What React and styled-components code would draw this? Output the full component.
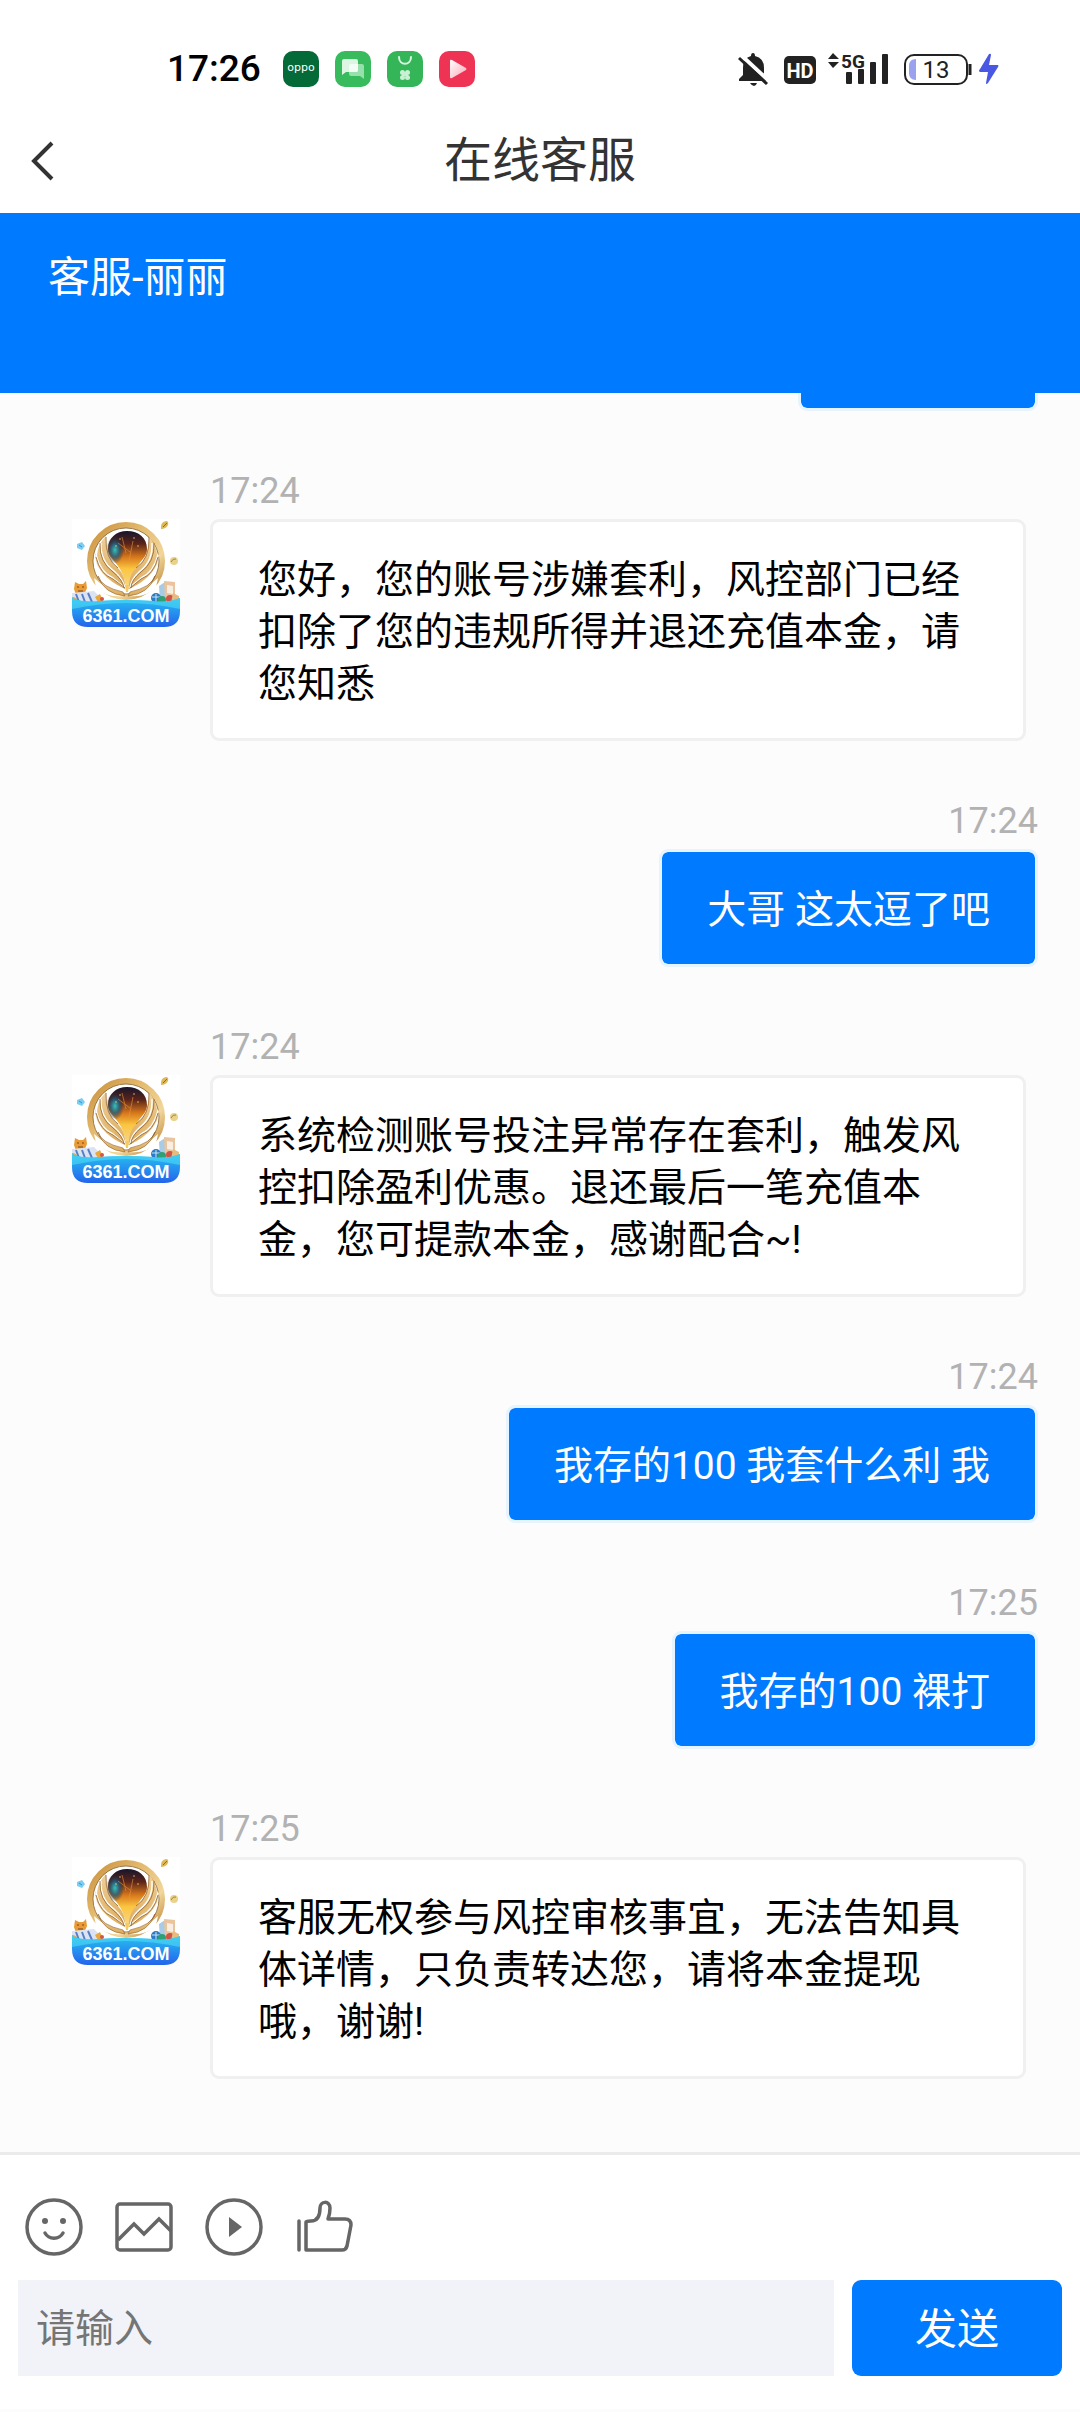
import React, { useState } from 'react'
import styled, { createGlobalStyle } from "styled-components";

const GlobalStyle = createGlobalStyle`
    * {
        box-sizing: border-box;
    }
    body {
        margin: 0;
        background-color: #ffffff;
        font-family: Roboto, "Noto Sans CJK SC", sans-serif;
    }
    button, input {
        font-family: inherit;
        border: none;
        padding: 0;
    }
`
const Page = styled.div`
    display: flex;
    flex-direction: column;
    height: 100vh;
    background-color: #fcfcfc;
`
const StatusBar = styled.div`
    display: flex;
    align-items: center;
    justify-content: space-between;
    height: 105px;
    padding: 33px 80px 0 167px;
    background-color: #ffffff;
`
const StatusGroup = styled.div`
    display: flex;
    align-items: center;
    gap: ${({ $gap }) => $gap};
`
const Clock = styled.span`
    font-size: 37px;
    font-weight: 500;
    line-height: 48px;
    color: #000000;
    margin-right: 6px;
`
const TitleBar = styled.header`
    display: grid;
    grid-template-columns: 90px 1fr 90px;
    align-items: center;
    height: 108px;
    background-color: #ffffff;
`
const BackButton = styled.button`
    display: flex;
    align-items: center;
    height: 108px;
    padding-left: 24px;
    background: none;
`
const Title = styled.h1`
    margin: 0;
    padding-top: 4px;
    text-align: center;
    font-size: 48px;
    font-weight: 400;
    line-height: 72px;
    color: #333333;
`
const AgentBanner = styled.div`
    height: 180px;
    padding: 35px 48px;
    flex-shrink: 0;
    background-color: #007aff;
    color: #ffffff;
    font-size: 42px;
    line-height: 60px;
`
/* column-reverse keeps the newest message in view */
const ChatWrapper = styled.main`
    display: flex;
    flex-direction: column-reverse;
    flex: 1;
    min-height: 0;
    overflow-y: auto;
    scrollbar-width: none;
`
const MessageList = styled.div`
    display: flex;
    flex-direction: column;
    gap: 59px;
    padding: 0 42px 73px 72px;
`
const Row = styled.div`
    display: flex;
    align-items: flex-end;
    justify-content: ${({ $mine }) => ($mine ? "flex-end" : "flex-start")};
    gap: 30px;
    padding-right: ${({ $mine }) => ($mine ? "0" : "12px")};
`
const AvatarWrapper = styled.div`
    align-self: flex-start;
    flex-shrink: 0;
    height: 157px;
    padding-top: 49px;
`
const MessageBody = styled.div`
    display: flex;
    flex-direction: column;
    align-items: ${({ $mine }) => ($mine ? "flex-end" : "flex-start")};
`
const Time = styled.time`
    margin-bottom: 7px;
    font-size: 36px;
    line-height: 42px;
    color: #b2b2b2;
`
const Bubble = styled.div`
    min-width: 240px;
    min-height: 118px;
    padding: 32px 45px 28px;
    border: 3px solid ${({ $mine }) => ($mine ? "#e6f4fd" : "#f0f0f0")};
    border-radius: 9px;
    background-color: ${({ $mine }) => ($mine ? "#007aff" : "#ffffff")};
    background-clip: padding-box;
    color: ${({ $mine }) => ($mine ? "#ffffff" : "#000000")};
    font-size: 39px;
    line-height: 52px;
`
const Footer = styled.form`
    flex-shrink: 0;
    margin-bottom: 3px;
    padding: 43px 18px 33px;
    border-top: 3px solid #ebebeb;
    background-color: #ffffff;
`
const ToolRow = styled.div`
    display: flex;
    gap: 32px;
    padding: 0 7px;
    margin-bottom: 24px;
`
const ToolButton = styled.button`
    display: flex;
    width: 58px;
    height: 58px;
    background: none;
    color: #666666;
`
const InputRow = styled.div`
    display: flex;
    gap: 18px;
`
const TextInput = styled.input`
    flex: 1;
    min-width: 0;
    height: 96px;
    padding: 2px 18px 0;
    border-radius: 0;
    background-color: #f2f3f8;
    color: #333333;
    font-size: 39px;
    outline: none;
    &::placeholder {
        color: #757575;
    }
`
const SendButton = styled.button`
    width: 210px;
    height: 96px;
    padding-bottom: 6px;
    border-radius: 9px;
    background-color: #007aff;
    color: #ffffff;
    font-size: 42px;
`


/**
 * Status bar icons
 */

const OppoIcon = () => (
    <svg width="36" height="36" viewBox="0 0 36 36">
        <rect width="36" height="36" rx="10" fill="#046a38" />
        <text x="18" y="20" textAnchor="middle" fontFamily="DejaVu Sans, sans-serif" fontSize="11" fill="#ffffff">oppo</text>
    </svg>
)

const ChatIcon = () => (
    <svg width="36" height="36" viewBox="0 0 36 36">
        <rect width="36" height="36" rx="10" fill="#37bb5d" />
        <path d="M16 13h11a2 2 0 0 1 2 2v13l-4-3h-9a2 2 0 0 1-2-2v-8a2 2 0 0 1 2-2z" fill="#97dfab" />
        <path d="M9 8h12a2 2 0 0 1 2 2v9a2 2 0 0 1-2 2H11l-4 3V10a2 2 0 0 1 2-2z" fill="#dcf6e3" />
        <path d="M16 13h7v6a2 2 0 0 1-2 2h-7v-6a2 2 0 0 1 2-2z" fill="#f3fdf5" />
    </svg>
)

const MarketIcon = () => (
    <svg width="36" height="36" viewBox="0 0 36 36">
        <rect width="36" height="36" rx="10" fill="#34b558" />
        <path d="M12 6c0 9 12 9 12 0" fill="none" stroke="#d9f7e1" strokeWidth="2" strokeLinecap="round" />
        <g fill="#c9f0d3">
            <circle cx="15.500" cy="21.500" r="2.500" />
            <circle cx="20.500" cy="21.500" r="2.500" />
            <circle cx="15.500" cy="26.500" r="2.500" />
            <circle cx="20.500" cy="26.500" r="2.500" />
            <rect x="15" y="21" width="6" height="4" />
        </g>
    </svg>
)

const VideoIcon = () => (
    <svg width="36" height="36" viewBox="0 0 36 36">
        <defs>
            <linearGradient id="videoPlay" x1="0" y1="0" x2="1" y2="1">
                <stop offset="0" stopColor="#ffffff" />
                <stop offset="1" stopColor="#f9a9b8" />
            </linearGradient>
        </defs>
        <rect width="36" height="36" rx="10" fill="#ee3355" />
        <path d="M11 10q0-2 2-1l14 8q1 1 0 2l-14 8q-2 1-2-1z" fill="url(#videoPlay)" />
    </svg>
)

const MutedIcon = () => (
    <svg width="36" height="36" viewBox="0 0 36 36">
        <path d="M17 2q2 0 2 3 9 2 9 12v7l5 4v2H3v-2l4-4v-7Q7 7 15 5q0-3 2-3z" fill="#222222" />
        <path d="M14 32h7q-1 3-3 3t-4-3z" fill="#222222" />
        <path d="M5 4l28 26" stroke="#ffffff" strokeWidth="4" />
        <path d="M3 7l28 26" stroke="#222222" strokeWidth="3" />
    </svg>
)

const HdIcon = () => (
    <svg width="32" height="36" viewBox="0 0 32 36">
        <rect y="5" width="32" height="28" rx="5" fill="#222222" />
        <text x="16" y="27" textAnchor="middle" fontFamily="Roboto, sans-serif" fontWeight="700" fontSize="20" fill="#ffffff">HD</text>
    </svg>
)

const SignalIcon = () => (
    <svg width="60" height="36" viewBox="0 0 60 36">
        <g fill="#222222">
            <path d="M0 8l5-6 6 6zM0 11h11l-6 6z" />
            <text x="13" y="17" fontFamily="Roboto, sans-serif" fontWeight="700" fontSize="19">5G</text>
            <rect x="18" y="21" width="6" height="12" rx="1" />
            <rect x="30" y="18" width="6" height="15" rx="1" />
            <rect x="42" y="11" width="6" height="22" rx="1" />
            <rect x="54" y="3" width="6" height="30" rx="1" />
        </g>
    </svg>
)

const BatteryIcon = () => (
    <svg width="100" height="36" viewBox="-4 0 100 36">
        <rect x="1" y="4" width="62" height="29" rx="9" fill="#ffffff" stroke="#222222" strokeWidth="2" />
        <path d="M12 8v21q-7 0-7-7v-7q0-7 7-7z" fill="#9aa1ee" />
        <text x="32" y="27" textAnchor="middle" fontFamily="Roboto, sans-serif" fontSize="24" fill="#222222">13</text>
        <path d="M66 13v11" stroke="#222222" strokeWidth="3" />
        <path d="M85 3q2-1 2 1l-2 10h9q1 1 0 2L84 32q-2 2-2 0l2-11h-8q-2-1 0-3z" fill="#4a57e3" />
    </svg>
)


/**
 * Avatar of the support agent
 */

const Avatar = () => (
    <svg width="108" height="108" viewBox="0 0 108 108" role="img" aria-label="6361.COM">
        <defs>
            <linearGradient id="gold" x1="0" y1="0" x2="1" y2="1">
                <stop offset="0" stopColor="#c98f3a" />
                <stop offset="0.4" stopColor="#e5bd72" />
                <stop offset="0.7" stopColor="#f2d69a" />
                <stop offset="1" stopColor="#b67a2b" />
            </linearGradient>
            <linearGradient id="wing" x1="0" y1="0" x2="0" y2="1">
                <stop offset="0" stopColor="#eed09a" />
                <stop offset="1" stopColor="#dcaa5a" />
            </linearGradient>
            <linearGradient id="flame" x1="0" y1="0" x2="0" y2="1">
                <stop offset="0" stopColor="#17152c" />
                <stop offset="0.22" stopColor="#5a2418" />
                <stop offset="0.45" stopColor="#d8781c" />
                <stop offset="0.65" stopColor="#fbc540" />
                <stop offset="1" stopColor="#f5d98e" />
            </linearGradient>
            <radialGradient id="nebula">
                <stop offset="0" stopColor="#35c4bd" />
                <stop offset="0.5" stopColor="#1d5d80" stopOpacity="0.8" />
                <stop offset="1" stopColor="#17223c" stopOpacity="0" />
            </radialGradient>
            <linearGradient id="water" x1="0" y1="0" x2="0" y2="1">
                <stop offset="0" stopColor="#27bff1" />
                <stop offset="1" stopColor="#2463ec" />
            </linearGradient>
        </defs>
        <path d="M0 0h108v92q0 16-16 16H16Q0 108 0 92z" fill="#ffffff" />

        {/* ring and cupped hands */}
        <circle cx="54" cy="42" r="36" fill="none" stroke="url(#gold)" strokeWidth="6" />
        <circle cx="54" cy="42" r="33" fill="none" stroke="#77501f" strokeWidth="0.7" />
        <path d="M22 59q11 11 28 14l2 4q-19 2-28-9z" fill="#ffffff" />
        <path d="M86 59q-11 11-28 14l-2 4q19 2 28-9z" fill="#ffffff" />
        <path d="M26 57q3 11 25 16l2 4Q32 75 26 57z" fill="url(#wing)" stroke="#8e602a" strokeWidth="0.6" />
        <path d="M83 57q-3 11-25 16l-2 4q21-2 27-20z" fill="url(#wing)" stroke="#8e602a" strokeWidth="0.6" />

        {/* orb with the flame below */}
        <path d="M55 12c12 0 20 7 20 18 0 12-15 14-17 40h-4C52 44 36 42 36 30c0-11 8-18 19-18z" fill="url(#flame)" />
        <ellipse cx="43" cy="31" rx="9" ry="14" fill="url(#nebula)" />
        <path d="M46 24l12 9M50 18l4 16M61 22l-4 20" stroke="#ec9438" strokeWidth="1" opacity="0.6" />
        <g fill="#ffd98b">
            <circle cx="48" cy="20" r="0.7" />
            <circle cx="62" cy="19" r="0.7" />
            <circle cx="66" cy="27" r="0.7" />
            <circle cx="44" cy="27" r="0.7" />
        </g>

        {/* feathers, leaving the orb free */}
        <path d="M34 17Q21 31 27 46q8 14 26 24Q54 57 46 49 33 40 34 17z" fill="url(#wing)" />
        <path d="M77 17q12 15 6 29-8 14-26 24-1-13 7-21 14-10 13-32z" fill="url(#wing)" />
        <path d="M23 34q0 22 30 36-4-9-15-17-9-5-15-19z" fill="url(#wing)" />
        <path d="M87 34q0 22-30 36 4-9 15-17 9-5 15-19z" fill="url(#wing)" />
        <g fill="none" stroke="#ffffff" strokeWidth="1.4">
            <path d="M29 24q-1 18 13 28 9 8 11 17" />
            <path d="M24 36q4 17 17 23l11 9" />
            <path d="M80 24q1 18-12 28-9 8-10 17" />
            <path d="M86 36q-4 17-17 23l-11 9" />
        </g>
        <g fill="none" stroke="#92622b" strokeWidth="0.8">
            <path d="M34 18Q33 40 46 49" />
            <path d="M77 18q1 22-13 31" />
            <path d="M28 24q-1 19 13 29 10 8 11 16" />
            <path d="M24 38q4 17 17 22l12 9" />
            <path d="M82 24q1 19-13 29-10 8-10 16" />
            <path d="M86 38q-4 17-17 22l-11 9" />
        </g>
        <path d="M53 66h4l-1 7h-2z" fill="#f4ca67" />

        {/* coins and dice */}
        <path d="M89 8q0-5 5-6 3 0 2 4-2 4-7 4z" fill="#ddb856" />
        <path d="M91 8l4-4" stroke="#8f6c22" />
        <ellipse cx="102" cy="42" rx="4" ry="4" fill="#ead28b" />
        <path d="M99 43q2-4 5-3" stroke="#a5813c" fill="none" />
        <path d="M5 25l5-2 3 4-3 4-5-2z" fill="#7bcdf1" />
        <path d="M7 26l3 2" stroke="#2b94cf" />

        {/* tiger and slot reels on the left */}
        <path d="M3 63l4 2h4l3-3 1 7-3 7H4l-2-6z" fill="#e99b37" />
        <path d="M5 68h2M10 68h2M6 72h5" stroke="#7c4415" />
        <path d="M0 74l22-2 8 8-3 7H0z" fill="#dbe3f2" />
        <path d="M4 75l3 8M10 75l3 8M16 74l4 9" stroke="#567ec7" strokeWidth="2" />
        <path d="M0 78q5-1 6 6H0zM23 78l5-3 3 6-4 4z" fill="#e9a83f" />
        <circle cx="30" cy="80" r="2" fill="#d95243" />

        {/* cards and chips on the right */}
        <path d="M87 67l6-4 4 17-9 2z" fill="#a7cce8" />
        <path d="M92 62l11 1v18H93z" fill="#ebc39c" />
        <path d="M95 66l6 1v8l-6-1z" fill="#f9eee2" />
        <circle cx="84" cy="79" r="5" fill="#2d7bc5" />
        <path d="M80 78h8M84 75v8" stroke="#c8e7f4" />
        <circle cx="90" cy="81" r="4" fill="#2fa074" />
        <circle cx="98" cy="80" r="4" fill="#cf5448" />
        <path d="M101 74l6 3v7h-8z" fill="#e7bb7f" />

        <path d="M0 79q12 5 27 3 27-2 54 0 15 2 27-3v13q0 16-16 16H16Q0 108 0 92z" fill="url(#water)" />
        <path d="M0 79q12 5 27 3 27-2 54 0 15 2 27-3v11q-54-12-108 0z" fill="#4fdaf3" opacity="0.6" />
        <text x="54" y="103" textAnchor="middle" fontFamily="Liberation Sans, sans-serif" fontWeight="700" fontSize="18" fill="#ffffff">6361.COM</text>
    </svg>
)


/**
 * Toolbar icons
 */

const SmileIcon = () => (
    <svg width="58" height="58" viewBox="0 0 58 58" fill="none" stroke="currentColor" strokeWidth="3.5">
        <circle cx="29" cy="29" r="27" />
        <circle cx="20" cy="23" r="3" fill="currentColor" stroke="none" />
        <circle cx="38" cy="23" r="3" fill="currentColor" stroke="none" />
        <path d="M20 35c4 7 14 7 18 0" strokeLinecap="round" />
    </svg>
)

const PictureIcon = () => (
    <svg width="58" height="58" viewBox="0 0 58 58" fill="none" stroke="currentColor" strokeWidth="3.5">
        <rect x="2" y="6" width="54" height="46" rx="3" />
        <path d="M3 42l16-16 10 10 15-15 12 12" />
    </svg>
)

const PlayIcon = () => (
    <svg width="58" height="58" viewBox="0 0 58 58" fill="none" stroke="currentColor" strokeWidth="3.5">
        <circle cx="29" cy="29" r="27" />
        <path d="M24 19v20l13-10z" fill="currentColor" stroke="none" />
    </svg>
)

const LikeIcon = () => (
    <svg width="58" height="58" viewBox="0 0 58 58" fill="none" stroke="currentColor" strokeWidth="3.5" strokeLinejoin="round" strokeLinecap="round">
        <path d="M4 23v29" />
        <path d="M11 24v28h36q4 0 5-4l4-21q0-6-6-6H33q2-5 2-11c0-8-10-7-10 0 0 8-2 13-9 13q-5 0-5 1z" />
    </svg>
)

const tools = [
    { label: "表情", icon: <SmileIcon /> },
    { label: "图片", icon: <PictureIcon /> },
    { label: "视频", icon: <PlayIcon /> },
    { label: "评价", icon: <LikeIcon /> },
]

const messages = [
    { mine: true },
    { time: "17:24", text: "您好，您的账号涉嫌套利，风控部门已经扣除了您的违规所得并退还充值本金，请您知悉" },
    { mine: true, time: "17:24", text: "大哥 这太逗了吧" },
    { time: "17:24", text: "系统检测账号投注异常存在套利，触发风控扣除盈利优惠。退还最后一笔充值本金，您可提款本金，感谢配合~!" },
    { mine: true, time: "17:24", text: "我存的100 我套什么利 我" },
    { mine: true, time: "17:25", text: "我存的100 裸打" },
    { time: "17:25", text: "客服无权参与风控审核事宜，无法告知具体详情，只负责转达您，请将本金提现哦，谢谢!" },
]

const Message = ({ item }) => (
    <Row $mine={item.mine}>
        {!item.mine && (
            <AvatarWrapper>
                <Avatar />
            </AvatarWrapper>
        )}
        <MessageBody $mine={item.mine}>
            {item.time && <Time>{item.time}</Time>}
            <Bubble $mine={item.mine}>{item.text}</Bubble>
        </MessageBody>
    </Row>
)

const App = () => {

    const [text, setText] = useState("");

    const handleSubmit = (e) => {
        e.preventDefault();
        setText("");
    };

    return (
        <Page>
            <GlobalStyle />
            <StatusBar>
                <StatusGroup $gap="16px">
                    <Clock>17:26</Clock>
                    <OppoIcon />
                    <ChatIcon />
                    <MarketIcon />
                    <VideoIcon />
                </StatusGroup>
                <StatusGroup $gap="12px">
                    <MutedIcon />
                    <HdIcon />
                    <SignalIcon />
                    <BatteryIcon />
                </StatusGroup>
            </StatusBar>
            <TitleBar>
                <BackButton type="button" aria-label="返回">
                    <svg width="36" height="48" viewBox="0 0 36 48" fill="none" stroke="#333333" strokeWidth="4">
                        <path d="M28 8L10 26l18 18" />
                    </svg>
                </BackButton>
                <Title>在线客服</Title>
            </TitleBar>
            <AgentBanner>客服-丽丽</AgentBanner>
            <ChatWrapper>
                <MessageList>
                    {messages.map((item, index) => (
                        <Message item={item} key={index} />
                    ))}
                </MessageList>
            </ChatWrapper>
            <Footer onSubmit={handleSubmit}>
                <ToolRow>
                    {tools.map((tool) => (
                        <ToolButton type="button" aria-label={tool.label} key={tool.label}>{tool.icon}</ToolButton>
                    ))}
                </ToolRow>
                <InputRow>
                    <TextInput
                        aria-label="请输入"
                        placeholder="请输入"
                        value={text}
                        onChange={(e) => setText(e.target.value)}
                    />
                    <SendButton type="submit">发送</SendButton>
                </InputRow>
            </Footer>
        </Page>
    )
}

export default App
